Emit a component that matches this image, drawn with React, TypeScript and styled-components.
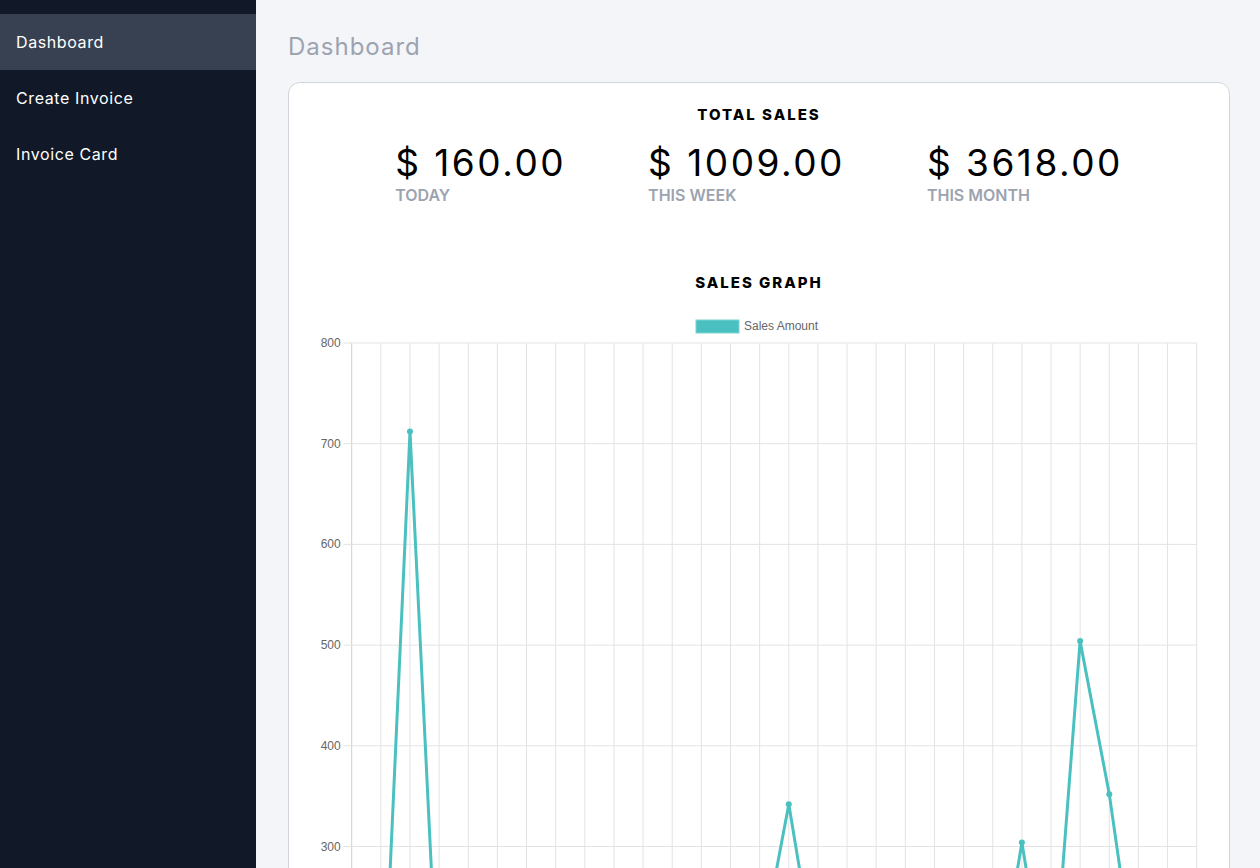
import styled, { createGlobalStyle } from "styled-components";

const GlobalStyle = createGlobalStyle`
  html, body {
    margin: 0;
    padding: 0;
    height: 100%;
    overflow: hidden;
  }
  body {
    font-family: Inter, "Noto Sans", "DejaVu Sans", sans-serif;
    background: #f4f5f9;
  }
  * {
    box-sizing: border-box;
  }
`;

const Shell = styled.div`
  display: flex;
  height: 100vh;
  overflow: hidden;
`;

const Sidebar = styled.nav`
  flex: 0 0 256px;
  background: #111827;
  padding-top: 14px;
  display: flex;
  flex-direction: column;
`;

const NavItem = styled.a<{ $active?: boolean }>`
  display: flex;
  align-items: center;
  height: 56px;
  padding-left: 16px;
  font-size: 16px;
  letter-spacing: 0.6px;
  color: #ffffff;
  text-decoration: none;
  background: ${(p) => (p.$active ? "#374151" : "transparent")};
  cursor: pointer;
`;

const Main = styled.main`
  flex: 1 1 auto;
  min-width: 0;
  padding: 31px 30px 0 32px;
  overflow: hidden;
`;

const PageTitle = styled.h1`
  margin: 0;
  font-size: 24px;
  line-height: 31px;
  font-weight: 400;
  letter-spacing: 1px;
  color: #9ca3af;
`;

const Card = styled.section`
  margin-top: 20px;
  background: #ffffff;
  border: 1px solid #d1d5db;
  border-radius: 12px;
  padding-top: 20px;
  padding-bottom: 40px;
`;

const SectionHeading = styled.h2<{ $gap?: number }>`
  margin: ${(p) => p.$gap ?? 0}px 0 0;
  text-align: center;
  font-size: 15px;
  line-height: 24px;
  font-weight: 800;
  letter-spacing: 2px;
  color: #000000;
`;

const StatsRow = styled.div`
  display: flex;
  justify-content: center;
  gap: 82px;
  margin-top: 14px;
`;

const Stat = styled.div`
  display: flex;
  flex-direction: column;
`;

const Amount = styled.span`
  font-size: 37px;
  line-height: 44px;
  font-weight: 400;
  letter-spacing: 2.5px;
  color: #000000;
`;

const StatLabel = styled.span`
  font-size: 16px;
  line-height: 20px;
  font-weight: 600;
  color: #9ca3af;
`;

const ChartBox = styled.div`
  margin-top: 10px;
`;

// daily sales for the month; only the top of the chart is on screen
const values = [
  40, 72, 712, 120, 0, 60, 0, 85, 30, 0, 45, 90, 0, 50, 188, 342, 167, 0, 75, 40, 0, 60, 129, 304, 126, 504, 352, 150, 0,
  160,
];

const CH_LEFT = 62.7;
const CH_RIGHT = 907.7;
const CH_TOP = 38;
const PX_PER_UNIT = 1.007;
const CH_BOTTOM = CH_TOP + 800 * PX_PER_UNIT;
const STEP = (CH_RIGHT - CH_LEFT) / (values.length - 1);
const TEAL = "#4bc0c0";
const AXIS_FONT = "'Liberation Sans', Arial, sans-serif";

function SalesChart() {
  const yOf = (v: number) => CH_BOTTOM - v * PX_PER_UNIT;
  const xOf = (i: number) => CH_LEFT + i * STEP;
  const pts = values.map((v, i) => `${xOf(i).toFixed(1)},${yOf(v).toFixed(1)}`).join(" ");
  const ticks = [0, 100, 200, 300, 400, 500, 600, 700, 800];
  const labelled = ticks.filter((t) => t >= 300);

  return (
    <svg width="940" height="860" viewBox="0 0 940 860" style={{ display: "block" }}>
      <rect x="407" y="15" width="43" height="13" fill={TEAL} stroke="#7fd3d3" strokeWidth="1" />
      <text x="455" y="25" fontFamily={AXIS_FONT} fontSize="12" fill="#666">
        Sales Amount
      </text>

      {values.map((_, i) => (
        <line
          key={`v${i}`}
          x1={xOf(i)}
          x2={xOf(i)}
          y1={CH_TOP}
          y2={CH_BOTTOM + 8}
          stroke={i === 0 ? "#cfcfcf" : "#e3e3e3"}
          strokeWidth="1"
        />
      ))}
      {ticks.map((t) => (
        <line
          key={`h${t}`}
          x1={CH_LEFT - 8}
          x2={CH_RIGHT}
          y1={yOf(t)}
          y2={yOf(t)}
          stroke={t === 0 ? "#cfcfcf" : "#e3e3e3"}
        />
      ))}
      {labelled.map((t) => (
        <text key={`l${t}`} x={CH_LEFT - 11} y={yOf(t) + 4} textAnchor="end" fontFamily={AXIS_FONT} fontSize="12" fill="#666">
          {t}
        </text>
      ))}

      <polyline points={pts} fill="none" stroke={TEAL} strokeWidth="3" strokeLinejoin="round" />
      {values.map((v, i) => (
        <circle key={`p${i}`} cx={xOf(i)} cy={yOf(v)} r="3" fill={TEAL} />
      ))}
    </svg>
  );
}

export default function App() {
  return (
    <>
      <GlobalStyle />
      <Shell>
        <Sidebar>
          <NavItem $active>Dashboard</NavItem>
          <NavItem>Create Invoice</NavItem>
          <NavItem>Invoice Card</NavItem>
        </Sidebar>
        <Main>
          <PageTitle>Dashboard</PageTitle>
          <Card>
            <SectionHeading>TOTAL SALES</SectionHeading>
            <StatsRow>
              <Stat>
                <Amount>$ 160.00</Amount>
                <StatLabel>TODAY</StatLabel>
              </Stat>
              <Stat>
                <Amount>$ 1009.00</Amount>
                <StatLabel>THIS WEEK</StatLabel>
              </Stat>
              <Stat>
                <Amount>$ 3618.00</Amount>
                <StatLabel>THIS MONTH</StatLabel>
              </Stat>
            </StatsRow>
            <SectionHeading $gap={66}>SALES GRAPH</SectionHeading>
            <ChartBox>
              <SalesChart />
            </ChartBox>
          </Card>
        </Main>
      </Shell>
    </>
  );
}
